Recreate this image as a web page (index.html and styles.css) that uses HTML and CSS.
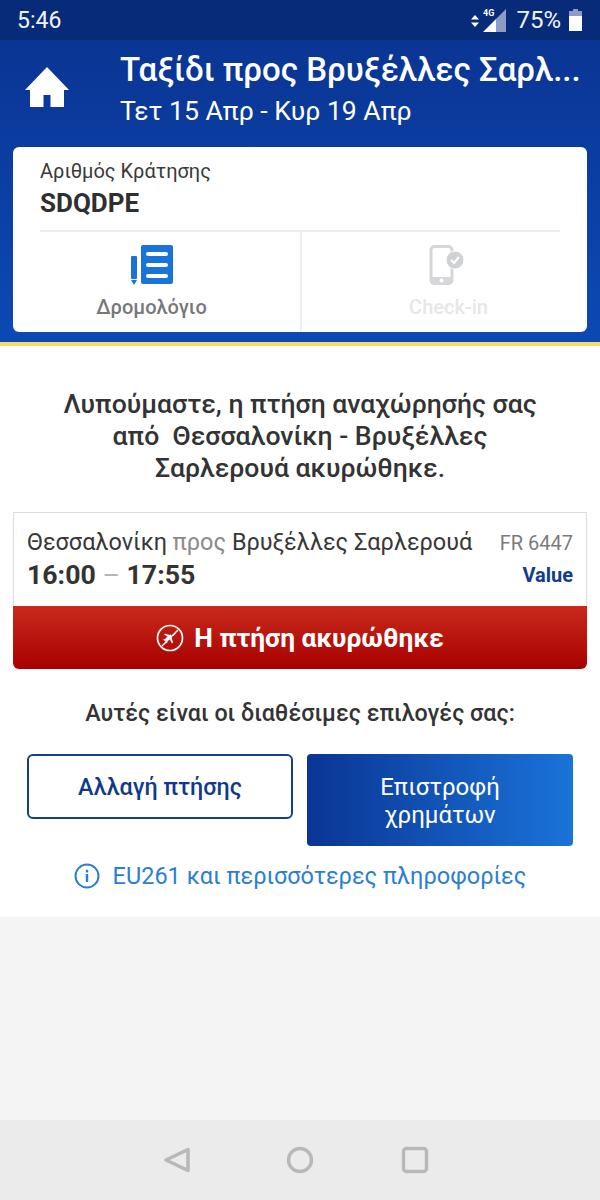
FILE: index.html
```html
<!DOCTYPE html>
<html lang="el">
<head>
<meta charset="utf-8">
<title>Ταξίδι</title>
<link rel="stylesheet" href="styles.css">
</head>
<body>
<div class="app">
  <div class="status">
    <span class="clock">5:46</span>
    <div class="status-right">
      <svg class="updown" width="8" height="12" viewBox="0 0 8 12"><path d="M4 0 8 4.500H0zM4 12 0 7.500H8z" fill="#fff"/></svg>
      <svg class="signal" width="24" height="24" viewBox="0 0 24 24"><path d="M23 0V23H13V10z" fill="#8c9cc6"/><path d="M13 10V23H0z" fill="#fff"/><text x="0" y="7" class="fourg">4G</text></svg>
      <span class="pct">75%</span>
      <svg width="13" height="22" viewBox="0 0 13 22"><path d="M4 0h5v2h4v5H0V2h4z" fill="#8c9cc6"/><path d="M0 7h13v15H0z" fill="#fff"/></svg>
    </div>
  </div>
  <header class="hero">
    <div class="topline">
      <svg class="home" width="44" height="40" viewBox="0 0 44 40"><path d="M22 0 44 23H39V40H25.500V28H18.500V40H5V23H0z" fill="#fff"/></svg>
      <div class="titles">
        <div class="title">Ταξίδι προς Βρυξέλλες Σαρλ...</div>
        <div class="dates">Τετ 15 Απρ - Κυρ 19 Απρ</div>
      </div>
    </div>
    <section class="card">
      <div class="booking">
        <div class="booking-label">Αριθμός Κράτησης</div>
        <div class="booking-code">SDQDPE</div>
      </div>
      <div class="tabs">
        <div class="tab tab-on">
          <svg width="42" height="40" viewBox="0 0 42 40"><rect x="0" y="11" width="6" height="23" rx="1" fill="#1a73d9"/><path d="M0 35h6l-3 5z" fill="#1a73d9"/><rect x="10" y="0" width="32" height="39" rx="2" fill="#1a73d9"/><rect x="15" y="7" width="22" height="4" rx="2" fill="#fff"/><rect x="15" y="18" width="22" height="4" rx="2" fill="#fff"/><rect x="15" y="29" width="22" height="4" rx="2" fill="#fff"/></svg>
          <span class="tab-label">Δρομολόγιο</span>
        </div>
        <div class="tab tab-off">
          <svg class="phone" width="36" height="40" viewBox="0 0 36 40"><rect x="2" y="1.500" width="21" height="37" rx="3.500" fill="none" stroke="#d4d6d9" stroke-width="3"/><rect x="2" y="32" width="21" height="7" fill="#d4d6d9"/><circle cx="12.500" cy="35.500" r="2" fill="#fff"/><circle cx="26" cy="15" r="9" fill="#cfd1d4" stroke="#fff" stroke-width="1"/><path d="M22 15l3 3 5-6" fill="none" stroke="#fff" stroke-width="2"/></svg>
          <span class="tab-label">Check-in</span>
        </div>
      </div>
    </section>
  </header>
  <main class="content">
    <h1 class="notice">Λυπούμαστε, η πτήση αναχώρησής σας<br>από&nbsp; Θεσσαλονίκη - Βρυξέλλες<br>Σαρλερουά ακυρώθηκε.</h1>
    <section class="flight">
      <div class="flight-info">
        <div class="flight-row">
          <span class="route">Θεσσαλονίκη <span class="muted">προς</span> Βρυξέλλες Σαρλερουά</span>
          <span class="flight-no">FR 6447</span>
        </div>
        <div class="flight-row flight-row-2">
          <span class="times">16:00 <span class="dash">–</span> 17:55</span>
          <span class="fare">Value</span>
        </div>
      </div>
      <div class="cancelled">
        <svg width="28" height="28" viewBox="0 0 28 28"><circle cx="14" cy="14" r="12.500" fill="none" stroke="#fff" stroke-width="1.700"/><path d="M6 22 22 6" stroke="#fff" stroke-width="1.500"/><path d="M7 15.500 9 15 11.500 12.500 8 10.500 9 9.800 14 11 15 10 15.500 13 17 18.500 16 19.500 13.500 15 11 17 11.300 19 10.500 19.300 9.200 17.200z" fill="#fff"/><path d="M16.500 11.500 19 9c.6-.6 1-.3.6.400L17.500 12z" fill="#fff"/></svg>
        <span>Η πτήση ακυρώθηκε</span>
      </div>
    </section>
    <p class="options">Αυτές είναι οι διαθέσιμες επιλογές σας:</p>
    <div class="actions">
      <button class="btn btn-outline">Αλλαγή πτήσης</button>
      <button class="btn btn-solid">Επιστροφή χρημάτων</button>
    </div>
    <div class="more">
      <svg width="26" height="26" viewBox="0 0 26 26"><circle cx="13" cy="13" r="11.500" fill="none" stroke="#2a7fd0" stroke-width="2"/><rect x="11.800" y="11" width="2.400" height="8" fill="#2a7fd0"/><rect x="11.800" y="6.800" width="2.400" height="2.600" fill="#2a7fd0"/></svg>
      <span>EU261 και περισσότερες πληροφορίες</span>
    </div>
  </main>
  <div class="filler"></div>
  <nav class="navbar">
    <svg class="nav-back" width="28" height="28" viewBox="0 0 28 28"><path d="M25 3.500V24.500L3 14z" fill="none" stroke="#b8b8b8" stroke-width="3.600" stroke-linejoin="round"/></svg>
    <svg width="28" height="28" viewBox="0 0 28 28"><circle cx="14" cy="14" r="11.500" fill="none" stroke="#b8b8b8" stroke-width="3.400"/></svg>
    <svg width="28" height="28" viewBox="0 0 28 28"><rect x="2.500" y="2.500" width="23" height="23" rx="3" fill="none" stroke="#b8b8b8" stroke-width="3.400"/></svg>
  </nav>
</div>
</body>
</html>
```
FILE: styles.css
```css
* { box-sizing: border-box; }
html, body { margin: 0; padding: 0; }
body { font-family: Roboto, "Liberation Sans", sans-serif; background: #f4f4f4; }
.app { width: 600px; height: 1200px; display: flex; flex-direction: column; overflow: hidden; }

.status { height: 40px; background: #072b78; color: #fff; display: flex; justify-content: space-between; align-items: center; padding: 0 18px 0 17px; flex: none; }
.clock { font-size: 23px; color: #f2f4fa; }
.status-right { display: flex; align-items: center; }
.updown { margin-right: 4px; margin-top: 1px; }
.signal { margin-right: 9px; margin-top: 1px; }
.fourg { font: 700 9px Roboto, sans-serif; fill: #fff; }
.pct { font-size: 24px; color: #f2f4fa; margin-right: 8px; }

.hero { height: 306px; flex: none; background: linear-gradient(180deg, #0a3594 0%, #0c49b4 100%); border-bottom: 4px solid #f5d96a; padding: 0 13px; }
.topline { height: 107px; display: flex; align-items: flex-start; }
.home { margin: 27px 0 0 12px; flex: none; }
.titles { margin: 10px 0 0 51px; white-space: nowrap; color: #fff; }
.title { font-size: 33px; font-weight: 500; line-height: 40px; }
.dates { font-size: 26.600px; line-height: 36px; margin-top: 3px; }

.card { background: #fff; border-radius: 6px; height: 185px; display: flex; flex-direction: column; padding: 0 27px; }
.booking { height: 85px; border-bottom: 2px solid #ececec; flex: none; padding-top: 11px; }
.booking-label { font-size: 20px; line-height: 26px; color: #3a3a3a; }
.booking-code { font-size: 26px; font-weight: 700; line-height: 36px; margin-top: 1px; color: #2f2f2f; }
.tabs { flex: 1; display: grid; grid-template-columns: 1fr 1fr; margin: 0 -27px; }
.tab { display: flex; flex-direction: column; align-items: center; padding-top: 13px; }
.tab-on { padding-right: 10px; }
.tab-off { padding-left: 8px; border-left: 2px solid #efefef; }
.phone { margin-left: -3px; }
.tab-label { font-size: 20px; font-weight: 500; color: #77787c; margin-top: 9px; line-height: 26px; }
.tab-off .tab-label { color: #e6e7e9; }

.content { background: #fff; height: 571px; flex: none; padding: 0 13px; }
.notice { margin: 42px 0 0; text-align: center; font-size: 26.600px; font-weight: 500; line-height: 32px; color: #333; height: 124px; }
.flight { border-radius: 0 0 6px 6px; }
.flight-info { height: 94px; border: 1px solid #dcdcdc; border-bottom: 0; padding: 11px 13px 0; }
.flight-row { display: flex; justify-content: space-between; align-items: baseline; }
.flight-row-2 { margin-top: -2px; }
.route { font-size: 23.450px; line-height: 36px; color: #383838; white-space: nowrap; }
.muted { color: #8a8a8a; }
.flight-no { font-size: 20px; color: #7b7b7b; }
.times { font-size: 26.700px; font-weight: 700; line-height: 34px; color: #333; }
.dash { font-weight: 400; color: #b5b5b5; }
.fare { font-size: 20px; font-weight: 700; color: #123c8c; position: relative; top: -2px; }
.cancelled { height: 63px; background: linear-gradient(180deg, #c92a1c 0%, #a80000 100%); border-radius: 0 0 6px 6px; display: flex; align-items: center; justify-content: center; gap: 10px; color: #fff; font-size: 26.400px; font-weight: 700; }

.options { margin: 30px 0 0; text-align: center; font-size: 23.250px; font-weight: 500; line-height: 28px; color: #333; }
.actions { display: grid; grid-template-columns: 1fr 1fr; gap: 14px; padding: 0 14px; margin-top: 27px; align-items: start; }
.btn { width: 100%; font-family: inherit; font-size: 23.300px; font-weight: 500; line-height: 28px; border-radius: 6px; display: block; }
.btn-outline { height: 65px; background: #fff; border: 2px solid #173f80; color: #0f3a8a; }
.btn-solid { height: 92px; background: linear-gradient(90deg, #0a3594 0%, #1a73d9 100%); border: 0; color: #fff; padding: 2px 50px 0; font-size: 24px; font-weight: 400; border-radius: 4px; }
.more { display: flex; align-items: center; justify-content: center; gap: 13px; margin-top: 16px; color: #2a7fd0; font-size: 23.500px; line-height: 28px; }

.filler { flex: 1; background: #f4f4f4; }
.navbar { height: 80px; flex: none; background: #ebebeb; display: flex; justify-content: center; align-items: center; gap: 87px; }
.nav-back { margin-left: -8px; margin-right: 8px; }
```
